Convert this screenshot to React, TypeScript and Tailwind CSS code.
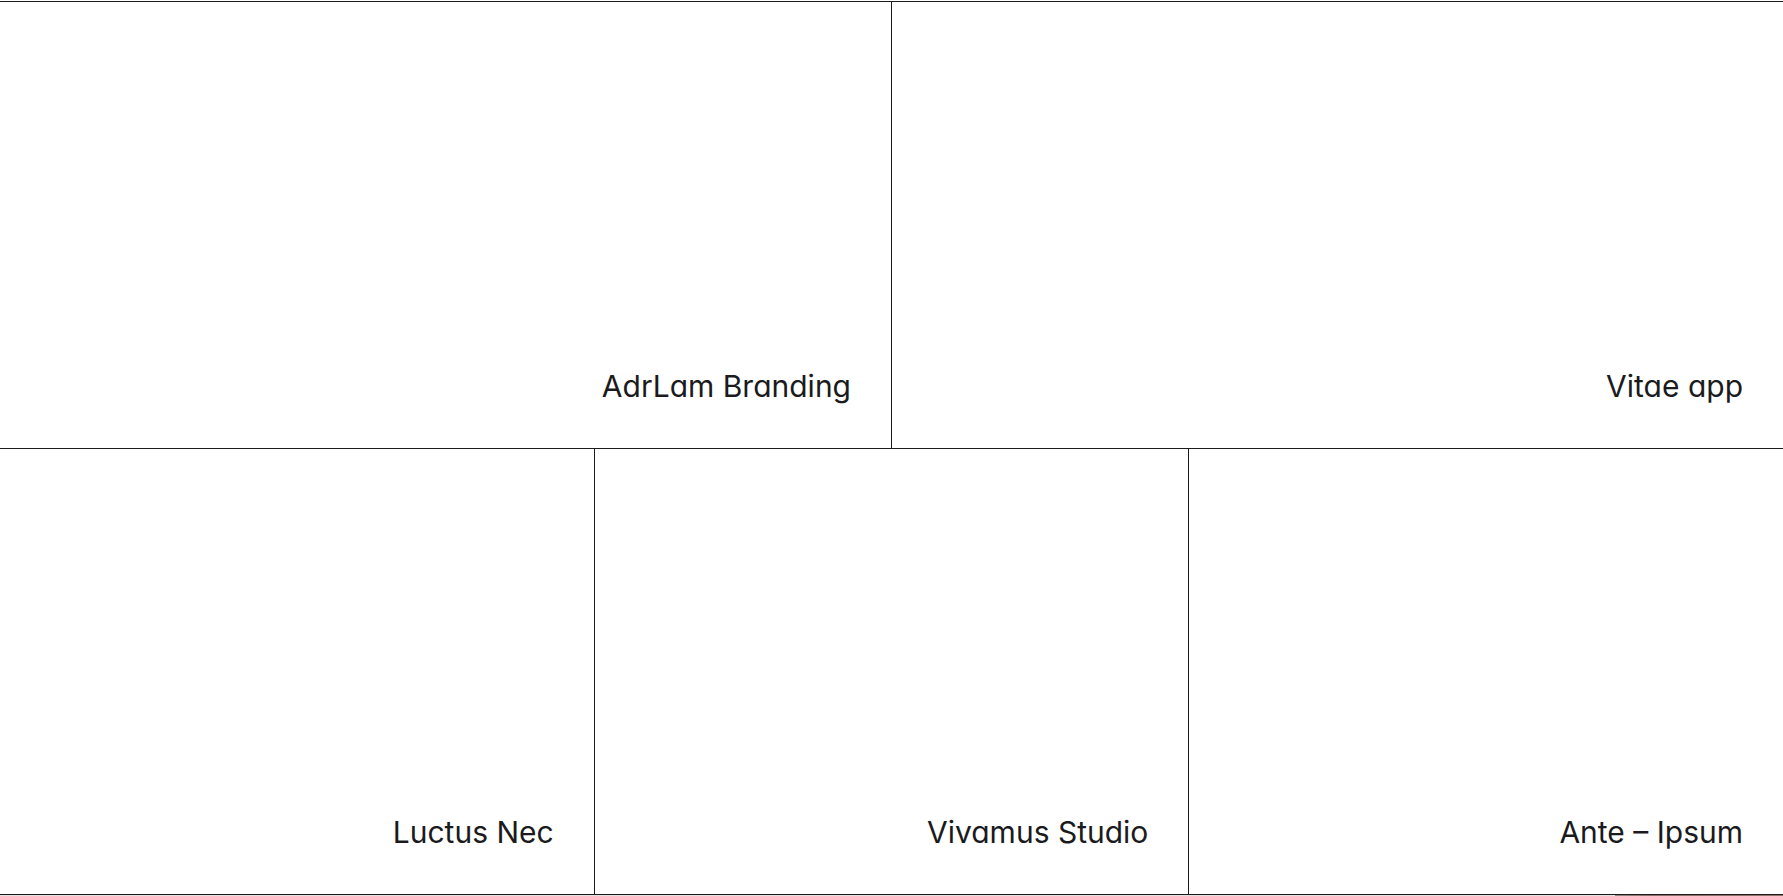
const rows: string[][] = [
  ["AdrLam Branding", "Vitae app"],
  ["Luctus Nec", "Vivamus Studio", "Ante – Ipsum"],
];

function Project({ name }: { name: string }) {
  return (
    <a
      href="#project"
      className="flex flex-1 items-end justify-end border-r border-[#1b1a1d] px-10 pt-10 pb-11 last:border-r-0"
    >
      <h2 className="text-[30px] leading-9 font-normal">{name}</h2>
    </a>
  );
}

export default function App() {
  return (
    <div className="flex min-h-screen flex-col bg-white pt-px font-['Inter',sans-serif] text-[#1b1a1d] [font-feature-settings:'cv11']">
      <main className="flex flex-1 flex-col border-t border-[#1b1a1d]">
        {rows.map((names) => (
          <section key={names[0]} className="flex flex-1 border-b border-[#1b1a1d]">
            {names.map((name) => (
              <Project key={name} name={name} />
            ))}
          </section>
        ))}
      </main>
      <footer className="flex h-px bg-[#e2e2e2]">
        <div className="ml-auto w-[9.4%] bg-linear-to-r from-[#8c8886] via-[#8a6e68] via-20% to-[#8f7468]" />
      </footer>
    </div>
  );
}
